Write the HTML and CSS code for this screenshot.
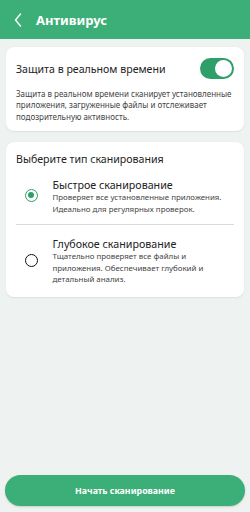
FILE: index.html
```html
<!DOCTYPE html>
<html lang="ru">
<head>
<meta charset="utf-8">
<link rel="stylesheet" href="styles.css">
</head>
<body>
<div class="app">
  <header class="topbar">
    <svg class="back" width="8" height="14" viewBox="0 0 8 14"><path d="M6.5 1 L1.5 7 L6.5 13" fill="none" stroke="#fff" stroke-width="1.4" stroke-linecap="round" stroke-linejoin="round"/></svg>
    <h1 class="title">Антивирус</h1>
  </header>
  <main class="content">
    <section class="card card-rt">
      <div class="rt-row">
        <span class="rt-label">Защита в реальном времени</span>
        <span class="toggle"><span class="thumb"></span></span>
      </div>
      <p class="rt-desc">Защита в реальном времени сканирует установленные приложения, загруженные файлы и отслеживает подозрительную активность.</p>
    </section>
    <section class="card card-scan">
      <div class="scan-head">Выберите тип сканирования</div>
      <div class="option">
        <span class="radio checked"><span class="dot"></span></span>
        <div class="opt-text">
          <div class="opt-title">Быстрое сканирование</div>
          <div class="opt-desc">Проверяет все установленные приложения. Идеально для регулярных проверок.</div>
        </div>
      </div>
      <div class="divider"></div>
      <div class="option">
        <span class="radio"></span>
        <div class="opt-text">
          <div class="opt-title">Глубокое сканирование</div>
          <div class="opt-desc">Тщательно проверяет все файлы и приложения. Обеспечивает глубокий и детальный анализ.</div>
        </div>
      </div>
    </section>
  </main>
  <div class="footer">
    <button class="start">Начать сканирование</button>
  </div>
</div>
</body>
</html>
```
FILE: styles.css
```css
* { box-sizing: border-box; }
html, body { margin: 0; padding: 0; }
body {
  width: 250px;
  height: 512px;
  background: #eef2f0;
  font-family: "Noto Sans", "Open Sans", sans-serif;
  color: #222;
  overflow: hidden;
}
.app {
  display: flex;
  flex-direction: column;
  height: 512px;
}
.topbar {
  height: 39px;
  flex: none;
  background: #3cae77;
  display: flex;
  align-items: center;
  padding-left: 14px;
  gap: 14px;
}
.back { display: block; }
.title {
  margin: 0;
  color: #fff;
  font-size: 13px;
  font-weight: 700;
  line-height: 16px;
}
.content {
  flex: 1;
  padding: 8px 6px 0;
  display: flex;
  flex-direction: column;
  gap: 11px;
}
.card {
  background: #fff;
  border-radius: 8px;
  box-shadow: 0 0.5px 1.5px rgba(0,0,0,0.08);
}
.card-rt { padding: 11px 10px 9px; }
.rt-row {
  display: flex;
  align-items: center;
  justify-content: space-between;
}
.rt-label { font-size: 10.6px; line-height: 14px; color: #222; }
.toggle {
  width: 34px;
  height: 21px;
  border-radius: 11px;
  background: #2e9f69;
  position: relative;
  display: block;
}
.thumb {
  position: absolute;
  right: 2px;
  top: 2px;
  width: 17px;
  height: 17px;
  border-radius: 50%;
  background: #fff;
}
.rt-desc {
  margin: 9px 0 0;
  font-size: 8px;
  line-height: 11.3px;
  color: #444;
}
.card-scan { padding: 10px 10px 3px; }
.scan-head { font-size: 10.6px; line-height: 14px; color: #222; }
.option {
  display: flex;
  align-items: center;
  padding: 12px 0 9px 0;
}
.radio {
  width: 13px;
  height: 13px;
  border: 1.5px solid #111;
  border-radius: 50%;
  margin: -2px 15px 0 8.5px;
  flex: none;
  display: flex;
  align-items: center;
  justify-content: center;
}
.radio.checked { border-color: #2e9f69; }
.dot {
  width: 6px;
  height: 6px;
  border-radius: 50%;
  background: #2e9f69;
}
.opt-title { font-size: 10.7px; color: #222; line-height: 14px; }
.opt-desc { font-size: 7.9px; line-height: 11.3px; color: #444; margin-top: 0.5px; }
.divider { height: 1px; background: #d8dcdb; }
.footer { padding: 0 5px 6px; flex: none; }
.start {
  display: block;
  width: 100%;
  height: 31px;
  border: none;
  border-radius: 16px;
  background: #3cae77;
  color: #fff;
  font-family: "Noto Sans", "Open Sans", sans-serif;
  font-size: 8.8px;
  font-weight: 700;
  box-shadow: 0 1px 2px rgba(0,0,0,0.15);
}
```
